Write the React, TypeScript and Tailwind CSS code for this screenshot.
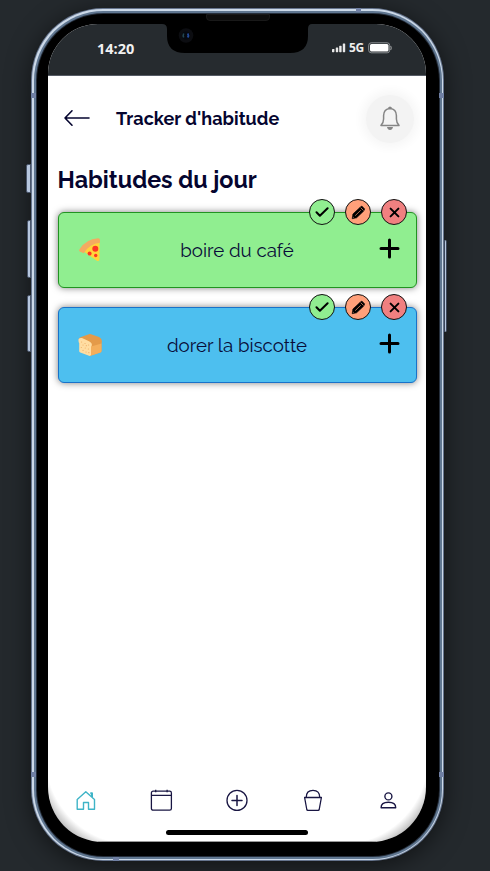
import React from "react";

function StatusBar() {
  return (
    <header className="relative flex h-[52px] shrink-0 items-start justify-between border-b border-[#555b65] bg-[#262b2f] pl-[49px] pr-[34px] text-white">
      <span className="mt-[15px] font-['Open_Sans','Noto_Sans',sans-serif] text-[14.5px] font-bold leading-[20px] text-[#f1f1f1]">14:20</span>
      <svg className="absolute left-[114px] top-0" width="150" height="30" viewBox="0 0 150 30">
        <path d="M0 0H150Q146 0 146 5V12Q146 29 128 29H23Q5 29 5 12V5Q5 0 0 0Z" fill="#000" />
        <circle cx="24" cy="11.5" r="7.3" fill="#0c0d11" />
        <circle cx="24" cy="11.5" r="4" fill="#050910" />
        <path d="M21.7 9.5q-1 2 0 4" stroke="#244650" strokeWidth="1.6" fill="none" />
        <path d="M25.7 9.5q1.4 2 0 4" stroke="#234b9b" strokeWidth="1.8" fill="none" />
      </svg>
      <div className="mt-[16px] flex h-[16px] items-center">
        <svg width="15" height="10" viewBox="0 0 15 10" fill="#e8e8e8">
          <rect x="0" y="6" width="2.4" height="3.2" rx=".6" />
          <rect x="3.8" y="4.5" width="2.4" height="4.7" rx=".6" />
          <rect x="7.2" y="2.8" width="2.4" height="6.4" rx=".6" />
          <rect x="10.8" y="0.5" width="2.4" height="8.7" rx=".6" />
        </svg>
        <span className="ml-[2px] w-[17px] font-['Open_Sans','Noto_Sans',sans-serif] text-[12px] font-bold leading-4 tracking-[-0.4px] text-[#eee]">5G</span>
        <svg className="ml-[2px]" width="24" height="12" viewBox="0 0 24 12">
          <rect x=".7" y=".8" width="21" height="10" rx="2.5" fill="none" stroke="#8b8f92" />
          <rect x="2" y="2" width="18.5" height="7.6" rx="1.5" fill="#fff" />
          <path d="M22.7 4q1.2 2 0 4" fill="none" stroke="#a0a3a5" />
        </svg>
      </div>
    </header>
  );
}

function Pizza() {
  return (
    <svg width="26" height="26" viewBox="0 0 26 26">
      <path d="M5 14Q10 6 21.5 4.5V22Q21.5 25 18.5 23.5Z" fill="#ffd43b" />
      <path d="M1.7 14.6Q.6 13.7 1.5 12.2Q8 2 20 1.2Q22 1.1 22 3V5.8Q11.5 7 5.7 16.2Z" fill="#f4aa61" />
      <circle cx="17.3" cy="11.7" r="3" fill="#ff3424" />
      <circle cx="11.6" cy="16.5" r="2" fill="#ff3424" />
      <circle cx="17.7" cy="18.5" r="1.7" fill="#ff3424" />
    </svg>
  );
}

function Bread() {
  return (
    <svg className="mt-[2px]" width="26" height="26" viewBox="0 0 26 26">
      <path d="M1 7Q0 5.2 3 4L11 1.2Q12 .9 13 1.3L21 4Q25 6 23.5 11V18Q23.5 19 22.5 19.4L12 22.8L8 13Z" fill="#e49a49" />
      <path d="M13 13.5L23.5 10.5V18Q23.5 19 22.5 19.5L12 23Z" fill="#f4ae5b" />
      <path d="M.5 7.5Q0 4.5 4 5L11 8.3Q14.5 10 13.7 12.7L13 14V22L11.7 23.1L2.3 19.6Q1.2 19 1.2 18V10Q.5 9.5.5 7.5Z" fill="#ffdda2" />
      <path d="M3.5 9h.1M7 10.5h.1M10.5 12h.1M5 12h.1M3.3 14.5h.1M7.2 15h.1M10.4 16h.1M5 17.3h.1M8 19h.1M10.8 19.7h.1M8.3 12.7h.1" stroke="#efb36d" strokeWidth="1.2" strokeLinecap="round" />
    </svg>
  );
}

function Actions() {
  const base = "flex size-[26px] items-center justify-center rounded-full border-[1.4px] border-[#111] text-black";
  return (
    <div className="absolute right-[8.5px] top-[-13.5px] flex gap-[10px]">
      <button className={`${base} bg-[#90ee90]`}>
        <svg width="14" height="12" viewBox="0 0 14 12"><path d="M1.5 6.3 4.9 9.8 12.6 2.2" fill="none" stroke="currentColor" strokeWidth="2" strokeLinecap="round" strokeLinejoin="round" /></svg>
      </button>
      <button className={`${base} bg-[#ffa07a]`}>
        <svg width="15" height="15" viewBox="0 0 15 15">
          <path d="M1.2 13.7 1.9 9 9.1 2.3 10.8 1 13.7 3.9 12.8 6 5.6 12.8Z" fill="currentColor" stroke="currentColor" strokeWidth=".6" strokeLinejoin="round" />
          <path d="M4.2 10.7 9.7 5.3M9.7 2.7l2.8 2.8M2.2 12.7l.7-.7" stroke="#ffa07a" strokeWidth=".7" />
        </svg>
      </button>
      <button className={`${base} bg-[#f08080]`}>
        <svg width="11" height="11" viewBox="0 0 11 11"><path d="M1.6 1.6 9.4 9.4M9.4 1.6 1.6 9.4" stroke="currentColor" strokeWidth="2" strokeLinecap="round" /></svg>
      </button>
    </div>
  );
}

interface HabitProps {
  icon: React.ReactNode;
  tone: string;
  children: React.ReactNode;
}

function Habit({ icon, tone, children }: HabitProps) {
  return (
    <article className={`relative flex h-[76.5px] items-center rounded-[6px] border-[1.5px] pl-[19px] pr-[16px] shadow-[0_0_7px_rgba(0,0,0,0.5)] ${tone}`}>
      {icon}
      <div className="flex flex-1 justify-center pr-[8px] pt-[1px] text-[18.7px] leading-6 text-[#080c38]">{children}</div>
      <svg className="mb-[3px]" width="21" height="21" viewBox="0 0 21 21"><path d="M10.5 2v17M2 10.5h17" stroke="#000" strokeWidth="3" strokeLinecap="round" /></svg>
      <Actions />
    </article>
  );
}

function Navigation() {
  return (
    <nav className="grid h-[84px] shrink-0 grid-cols-5 bg-[radial-gradient(circle_at_85px_-1px,transparent_87px,rgba(0,0,0,0.32)_101px),radial-gradient(circle_at_0px_-1px,transparent_87px,rgba(0,0,0,0.32)_101px)] bg-[length:85px_84px,85px_84px] bg-[position:left_bottom,right_bottom] bg-no-repeat pt-[30px] text-[#191643] [&>svg]:mx-auto">
      <svg width="24" height="24" viewBox="0 0 24 24" fill="none" stroke="#3eb4c7" strokeWidth="1.4" strokeLinejoin="round"><path d="M3.2 11.5 11.8 3.8 20.5 11.5V21.3H14.5V14.5H9.5V21.3H3.2Z" /><path d="M16.3 5.3h1.7v3.6" strokeWidth="2" /></svg>
      <svg width="24" height="24" viewBox="0 0 24 24" fill="none" stroke="currentColor" strokeWidth="1.3"><rect x="2.4" y="3.2" width="20" height="19" rx="1.7" /><path d="M2.4 7.4h20M6.7 1.7V4.2M18.1 1.7V4.2" /></svg>
      <svg width="24" height="24" viewBox="0 0 24 24" fill="none" stroke="currentColor" strokeWidth="1.3"><circle cx="12" cy="12.4" r="10" /><path d="M12 7.4v10M7 12.4h10" strokeWidth="1.5" strokeLinecap="round" /></svg>
      <svg width="24" height="24" viewBox="0 0 24 24" fill="none" stroke="currentColor" strokeWidth="1.3" strokeLinejoin="round"><path d="M3.6 9.5H20.4L18.2 21.5Q18 22.3 17.3 22.3H6.7Q6 22.3 5.8 21.5Z" /><path d="M5.3 9.3Q5.3 2.3 12 2.3T18.7 9.3" /></svg>
      <svg width="24" height="24" viewBox="0 0 24 24" fill="none" stroke="currentColor" strokeWidth="1.4"><circle cx="12.4" cy="8.4" r="3.5" /><path d="M5.1 19.8Q4.9 14.3 12.4 14.3T19.7 19.8Z" strokeLinejoin="round" /></svg>
    </nav>
  );
}

export default function App() {
  return (
    <main className="h-[871px] w-[490px] overflow-hidden bg-[#24292d] pl-[31px] pt-[8px] font-['Raleway','Lato',sans-serif]">
      <div className="relative h-[853px] w-[413px] rounded-[72px] bg-[#65748d] p-px shadow-[0_4px_24px_rgba(0,0,0,0.55)]">
        <i className="absolute left-[-5px] top-[156px] h-[29px] w-[5px] rounded-l-[2px] border border-[#4a566b] bg-[#b7c7df]" />
        <i className="absolute left-[-4px] top-[212px] h-[58px] w-[4px] rounded-l-[2px] border border-[#4a566b] bg-[#b7c7df]" />
        <i className="absolute left-[-4px] top-[287px] h-[57px] w-[4px] rounded-l-[2px] border border-[#4a566b] bg-[#b7c7df]" />
        <i className="absolute right-[-3px] top-[232px] h-[92px] w-[3px] rounded-r-[2px] border-x border-[#3c475b] bg-[#b7c7df]" />
        <div className="h-full rounded-[71px] bg-[#ccd9e8] p-[1.5px]">
          <div className="h-full rounded-[69.5px] bg-[#607791] p-[2px]">
            <div className="h-full rounded-[67.5px] bg-[#252e3b] p-px">
              <div className="relative h-full rounded-[66.5px] bg-black pb-[13.5px] pl-[11.5px] pr-[12.5px] pt-[10.5px]">
                <i className="absolute left-[169px] top-0 h-[7px] w-[64px] rounded-b-[4px] border border-[#191919] bg-[#0d0d0d]" />
                <section className="relative flex h-full flex-col overflow-hidden rounded-t-[50px] rounded-b-[55px] bg-white text-[#05052f]">
                  <StatusBar />
                  <div className="flex h-[84px] shrink-0 items-center pl-[15px] pr-[12px] pt-[1px]">
                    <svg className="mb-[1px]" width="28" height="18" viewBox="0 0 28 18" fill="none" stroke="currentColor" strokeWidth="1.6" strokeLinecap="round" strokeLinejoin="round"><path d="M26 9H2M9 1.8 2 9l7 7.2" /></svg>
                    <h1 className="ml-[25px] pt-[1px] text-[18px] font-bold leading-6 tracking-[0.05px]">Tracker d'habitude</h1>
                    <div className="ml-auto flex size-[48px] items-center justify-center rounded-full bg-[#f3f3f3] shadow-[0_0_10px_5px_#f7f7f7]">
                      <svg className="mb-[1px]" width="22" height="24" viewBox="0 0 22 24" fill="none" stroke="#858585" strokeWidth="1.5"><path d="M2 19.4Q4.5 17.2 4.6 13V9.5Q4.7 3 11 2.4Q17.3 3 17.4 9.5V13Q17.5 17.2 20 19.4Z" strokeLinejoin="round" /><path d="M9.5 2.4Q11 0 12.5 2.4" /><path d="M8 21h6q-.6 3-3 3t-3-3Z" fill="#858585" stroke="none" /></svg>
                    </div>
                  </div>
                  <div className="px-[9.5px] pt-[3.5px]">
                    <h2 className="text-[23.3px] font-bold leading-8">Habitudes du jour</h2>
                    <div className="mt-[16px] flex flex-col gap-[18.5px]">
                      <Habit icon={<Pizza />} tone="border-[#229322] bg-[#90ee90]">boire du café</Habit>
                      <Habit icon={<Bread />} tone="border-[#1972c9] bg-[#4dbfef]">dorer la biscotte</Habit>
                    </div>
                  </div>
                  <div className="flex-1" />
                  <Navigation />
                  <div className="absolute bottom-[7px] left-[118px] h-[5px] w-[142px] rounded-full bg-black" />
                  <i className="absolute bottom-0 left-[50px] right-[50px] h-px bg-[#999]" />
                </section>
              </div>
            </div>
          </div>
        </div>
        <i className="absolute left-0 top-[85px] h-[5px] w-[5px] bg-[#7080a4]" />
        <i className="absolute right-0 top-[85px] h-[5px] w-[5px] bg-[#7080a4]" />
        <i className="absolute bottom-[84px] left-0 h-[5px] w-[5px] bg-[#7080a4]" />
        <i className="absolute bottom-[84px] right-0 h-[5px] w-[5px] bg-[#7080a4]" />
        <i className="absolute right-[83px] top-0 h-[4px] w-[5px] bg-[#7080a4]" />
        <i className="absolute bottom-0 left-[82px] h-[4px] w-[6px] bg-[#7080a4]" />
      </div>
    </main>
  );
}
